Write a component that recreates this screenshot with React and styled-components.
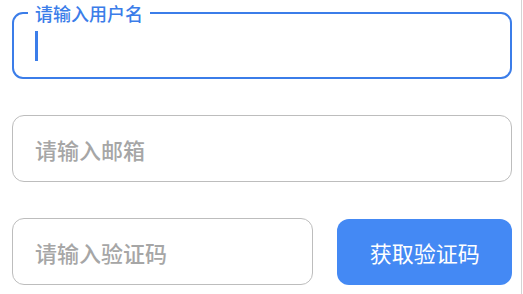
import styled, { createGlobalStyle } from 'styled-components';

const GlobalStyle = createGlobalStyle`
  html, body {
    margin: 0;
    padding: 0;
    background: #ffffff;
  }
  body {
    font-family: "Noto Sans CJK SC", "Noto Sans", sans-serif;
  }
`;

const Page = styled.div`
  box-sizing: border-box;
  width: 522px;
  min-height: 100vh;
  border-right: 1px solid #d4d4d4;
  padding: 4px 0 0 12px;
`;

const Form = styled.form`
  display: flex;
  flex-direction: column;
  gap: 36px;
  width: 500px;
`;

const Outlined = styled.fieldset`
  margin: 0;
  padding: 0 21px;
  min-inline-size: 0;
  border: 2px solid #3b7de9;
  border-radius: 11px;
`;

const Legend = styled.legend`
  margin-left: -7px;
  padding: 0 7px;
  font-size: 18px;
  line-height: 18px;
  font-weight: 500;
  color: #3b7de9;
`;

const ActiveRow = styled.div`
  box-sizing: border-box;
  height: 55px;
  padding-top: 9px;
  display: flex;
  align-items: flex-start;
`;

const Caret = styled.span`
  display: block;
  width: 2.5px;
  height: 30px;
  background: #3b7de9;
`;

const Input = styled.input`
  box-sizing: border-box;
  width: ${({ $width }) => $width || '100%'};
  height: 67px;
  margin: 0;
  padding: 0 22px;
  border: 1.5px solid #bdbdbd;
  border-radius: 12px;
  outline: none;
  background: #fff;
  font-family: "Noto Sans CJK SC", "Noto Sans", sans-serif;
  font-size: 22px;
  font-weight: 500;
  color: #333;

  &::placeholder {
    color: #a6a6a6;
  }
`;

const Row = styled.div`
  display: flex;
  align-items: center;
  gap: 24px;
`;

const Button = styled.button`
  box-sizing: border-box;
  width: 175px;
  height: 66px;
  border: none;
  border-radius: 12px;
  background: #4489f4;
  color: #ffffff;
  font-family: "Noto Sans CJK SC", "Noto Sans", sans-serif;
  font-size: 22px;
  cursor: pointer;
`;

export default function App() {
  return (
    <>
      <GlobalStyle />
      <Page>
        <Form onSubmit={(e) => e.preventDefault()}>
          <Outlined>
            <Legend>请输入用户名</Legend>
            <ActiveRow>
              <Caret />
            </ActiveRow>
          </Outlined>
          <Input placeholder="请输入邮箱" />
          <Row>
            <Input $width="302px" placeholder="请输入验证码" />
            <Button type="button">获取验证码</Button>
          </Row>
        </Form>
      </Page>
    </>
  );
}
